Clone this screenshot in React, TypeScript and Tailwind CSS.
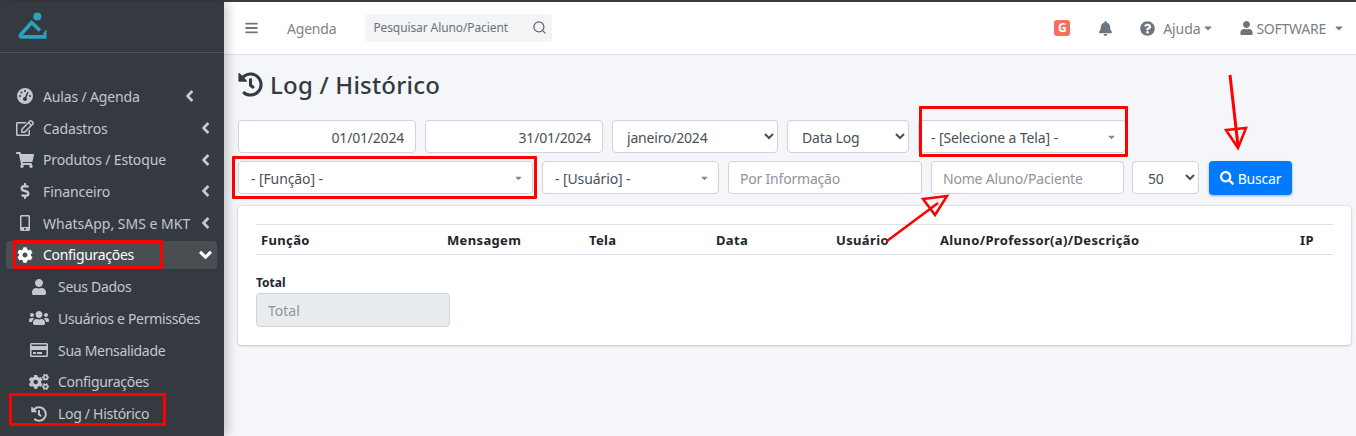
import React from 'react';
import {
  FaAngleDown,
  FaAngleLeft,
  FaBars,
  FaBell,
  FaCaretDown,
  FaCog,
  FaCogs,
  FaDollarSign,
  FaHistory,
  FaMobileAlt,
  FaQuestionCircle,
  FaRegCreditCard,
  FaRegEdit,
  FaSearch,
  FaShoppingCart,
  FaUser,
  FaUsers,
} from 'react-icons/fa';
import { FaGaugeHigh } from 'react-icons/fa6';
import { Search } from 'lucide-react';

const menu = [
  { label: 'Aulas / Agenda', icon: FaGaugeHigh, pr: 'pr-[23px]', text: 'tracking-[-0.15px]' },
  { label: 'Cadastros', icon: FaRegEdit, pr: 'pr-[7px]', text: 'tracking-[-0.1px]' },
  { label: 'Produtos / Estoque', icon: FaShoppingCart, pr: 'pr-[7px]', text: 'tracking-[-0.15px]' },
  { label: 'Financeiro', icon: FaDollarSign, pr: 'pr-[7px]', text: 'tracking-[-0.1px]' },
  { label: 'WhatsApp, SMS e MKT', icon: FaMobileAlt, pr: 'pr-[7px]', text: 'tracking-normal' },
];

const subMenu = [
  { label: 'Seus Dados', icon: FaUser },
  { label: 'Usuários e Permissões', icon: FaUsers },
  { label: 'Sua Mensalidade', icon: FaRegCreditCard },
  { label: 'Configurações', icon: FaCogs },
  { label: 'Log / Histórico', icon: FaHistory },
];

function Sidebar() {
  return (
    <aside className="w-[224px] shrink-0 bg-[#343a40] text-[#c2c7d0] z-10 shadow-[4px_0_10px_rgba(0,0,0,0.2)]">
      <div className="h-[51px] pl-[17px] pt-[8px] border-b border-[#4b545c]">
        <svg width="31" height="31" viewBox="0 0 31 31" fill="none">
          <circle cx="20.3" cy="6.5" r="4" fill="#2aa3bd" />
          <path d="M3 25.5 L14.6 12.5 L23 20.5" stroke="#2aa3bd" strokeWidth="3.6" />
          <path d="M1.5 25 Q1 28.7 5 28.7 H29.5 V19.5 L26.5 22.5 V25 H6 Z" fill="#2aa3bd" />
        </svg>
      </div>
      <nav className="pt-[27.5px] pl-[6px] pr-[7px] text-[14px]">
        {menu.map((item) => (
          <div key={item.label} className={`flex items-center h-[31.7px] pl-[10px] ${item.pr}`}>
            <item.icon className="w-[18px] h-[16px] mr-[9px] shrink-0" />
            <span className={`flex-1 whitespace-nowrap ${item.text}`}>{item.label}</span>
            <FaAngleLeft className="w-[9px] h-[18px] shrink-0" />
          </div>
        ))}
        <div className="flex items-center h-[28px] my-[2px] pl-[10px] pr-[5px] rounded bg-[#494e53] text-white">
          <FaCog className="w-[18px] h-[16px] mr-[9px] shrink-0" />
          <span className="flex-1 tracking-[-0.3px]">Configurações</span>
          <FaAngleDown className="w-[13px] h-[20px]" />
        </div>
        {subMenu.map((item) => (
          <div key={item.label} className="flex items-center h-[31.7px] pl-[23px]">
            <item.icon className="w-[20px] h-[16px] mr-[9px] shrink-0" />
            <span className="whitespace-nowrap tracking-[-0.3px]">{item.label}</span>
          </div>
        ))}
      </nav>
    </aside>
  );
}

function Header() {
  return (
    <header className="h-[53px] shrink-0 flex items-center bg-white border-b border-[#dee2e6] text-[14px] text-[#7a7f85]">
      <FaBars className="ml-[21px] w-[13px] h-[14px] text-[#6c757d]" />
      <span className="ml-[29px] text-[#808489] tracking-[-0.2px]">Agenda</span>
      <div className="ml-[29px] flex items-center w-[187px] h-[28px] rounded bg-[#f2f4f6] pl-[8px] text-[12px] tracking-[-0.1px] text-[#6b7278]">
        <span className="flex-1">Pesquisar Aluno/Pacient</span>
        <Search className="w-[15px] h-[15px] mr-[5px] mb-[2px] text-[#5f666c]" strokeWidth={2} />
      </div>
      <div className="ml-auto flex items-center pr-[13px]">
        <span className="w-[16px] h-[16px] rounded-[3px] bg-[#f56e5f] text-white text-[12px] font-bold flex items-center justify-center">
          G
        </span>
        <FaBell className="ml-[29px] w-[13px] h-[15px] text-[#6c757d]" />
        <FaQuestionCircle className="ml-[28px] w-[15px] h-[15px] text-[#6c757d]" />
        <span className="ml-[8px] tracking-[-0.1px]">Ajuda</span>
        <FaCaretDown className="ml-[4px] w-[8px] h-[12px]" />
        <FaUser className="ml-[28px] w-[13px] h-[14px] text-[#6c757d]" />
        <span className="ml-[3px] tracking-[-0.25px]">SOFTWARE</span>
        <FaCaretDown className="ml-[9px] w-[8px] h-[12px]" />
      </div>
    </header>
  );
}

function FakeSelect({ label, className }: { label: string; className: string }) {
  return (
    <div className={`h-[33px] flex items-center bg-white border border-[#ced4da] rounded-[4px] pl-[12px] pr-[9px] ${className}`}>
      <span className="flex-1 pt-[2px] whitespace-nowrap tracking-[-0.1px]">{label}</span>
      <FaCaretDown className="w-[9px] h-[10px] text-[#888]" />
    </div>
  );
}

const fieldClass =
  'h-[33px] bg-white border border-[#ced4da] rounded-[4px] px-[11px] pt-[2px] text-[14px] tracking-[-0.2px] text-[#495057] placeholder:text-[#8f959b] outline-none';

const columns = [
  { label: 'Função', width: 'w-[186px]' },
  { label: 'Mensagem', width: 'w-[142px]' },
  { label: 'Tela', width: 'w-[127px]' },
  { label: 'Data', width: 'w-[120px]' },
  { label: 'Usuário', width: 'w-[104px]' },
  { label: 'Aluno/Professor(a)/Descrição', width: 'w-[360px]' },
  { label: 'IP', width: '' },
];

function Filters() {
  return (
    <div className="flex flex-col gap-[8px] text-[14px] text-[#495057]">
      <div className="flex gap-[9px]">
        <input readOnly value="01/01/2024" className={`${fieldClass} w-[178px] text-right`} />
        <input readOnly value="31/01/2024" className={`${fieldClass} w-[178px] text-right`} />
        <select defaultValue="janeiro/2024" className={`${fieldClass} w-[166px] pl-[10px]`}>
          <option>janeiro/2024</option>
        </select>
        <select defaultValue="Data Log" className={`${fieldClass} w-[122px] pl-[10px]`}>
          <option>Data Log</option>
        </select>
        <FakeSelect label="- [Selecione a Tela] -" className="w-[208px]" />
      </div>
      <div className="flex gap-[9px]">
        <FakeSelect label="- [Função] -" className="w-[295px]" />
        <FakeSelect label="- [Usuário] -" className="w-[177px]" />
        <input placeholder="Por Informação" className={`${fieldClass} w-[194px]`} />
        <input placeholder="Nome Aluno/Paciente" className={`${fieldClass} w-[193px]`} />
        <select defaultValue="50" className={`${fieldClass} w-[67px] -ml-[1px]`}>
          <option>50</option>
        </select>
        <button className="ml-[1px] w-[83px] h-[34px] flex items-center justify-center gap-[4px] rounded-[4px] bg-[#007bff] text-white tracking-[-0.2px] shadow-[0_1px_3px_rgba(0,0,0,0.3)]">
          <FaSearch className="w-[14px] h-[14px]" />
          Buscar
        </button>
      </div>
    </div>
  );
}

function ResultCard() {
  return (
    <section className="mt-[11px] mr-[5px] h-[139px] bg-white rounded-[4px] shadow-[0_0_2px_rgba(0,0,0,0.2),0_1px_3px_rgba(0,0,0,0.15)] pt-[18px] px-[18px]">
      <table className="w-full table-fixed border-y border-[#dee2e6] text-[13px] tracking-[0.35px] text-[#212529]">
        <thead>
          <tr className="h-[30px]">
            {columns.map((col) => (
              <th key={col.label} className={`${col.width} px-[5px] pt-[2px] text-left font-bold whitespace-nowrap`}>
                {col.label}
              </th>
            ))}
          </tr>
        </thead>
      </table>
      <label className="block mt-[20px] text-[12px] font-bold leading-[16px] text-[#212529]">Total</label>
      <input
        disabled
        placeholder="Total"
        className="block mt-[2px] w-[194px] h-[34px] bg-[#e9ecef] border border-[#ced4da] rounded-[4px] px-[11px] text-[14px] placeholder:text-[#8f959b]"
      />
    </section>
  );
}

const redBoxes = [
  'left-[13px] top-[240px] w-[150px] h-[29px]',
  'left-[9px] top-[393px] w-[157px] h-[33px]',
  'left-[232px] top-[156px] w-[305px] h-[43px]',
  'left-[919px] top-[106px] w-[209px] h-[51px]',
];

function Annotations() {
  return (
    <>
      {redBoxes.map((box) => (
        <div key={box} className={`absolute z-20 border-[3px] border-[#ff0000] rounded-[1px] ${box}`} />
      ))}
      <svg className="absolute left-0 top-0 z-20 pointer-events-none" width="1356" height="436" fill="none" stroke="#ff0000" strokeWidth="2.5">
        <path d="M887 241 L938 203" />
        <path d="M923 199 L947 196 L935 215 Z" />
        <path d="M1230 75 L1238 146" strokeWidth="3" />
        <path d="M1226 130 L1246 128 L1238 148 Z" />
      </svg>
    </>
  );
}

export default function App() {
  return (
    <div className="relative w-[1356px] h-[436px] overflow-hidden flex flex-col bg-[#f4f6f9] font-['Noto_Sans',sans-serif]">
      <div className="h-[2px] shrink-0 bg-[#3b3b3b]" />
      <div className="flex flex-1 min-h-0">
        <Sidebar />
        <div className="flex-1 min-w-0 flex flex-col">
          <Header />
          <main className="pl-[14px] pt-[13px]">
            <h1 className="flex items-center gap-[7px] h-[33px] text-[24px] font-medium tracking-[0.2px] text-[#343a40]">
              <FaHistory className="w-[25px] h-[25px]" />
              Log / Histórico
            </h1>
            <div className="mt-[19px]">
              <Filters />
              <ResultCard />
            </div>
          </main>
        </div>
      </div>
      <Annotations />
    </div>
  );
}
